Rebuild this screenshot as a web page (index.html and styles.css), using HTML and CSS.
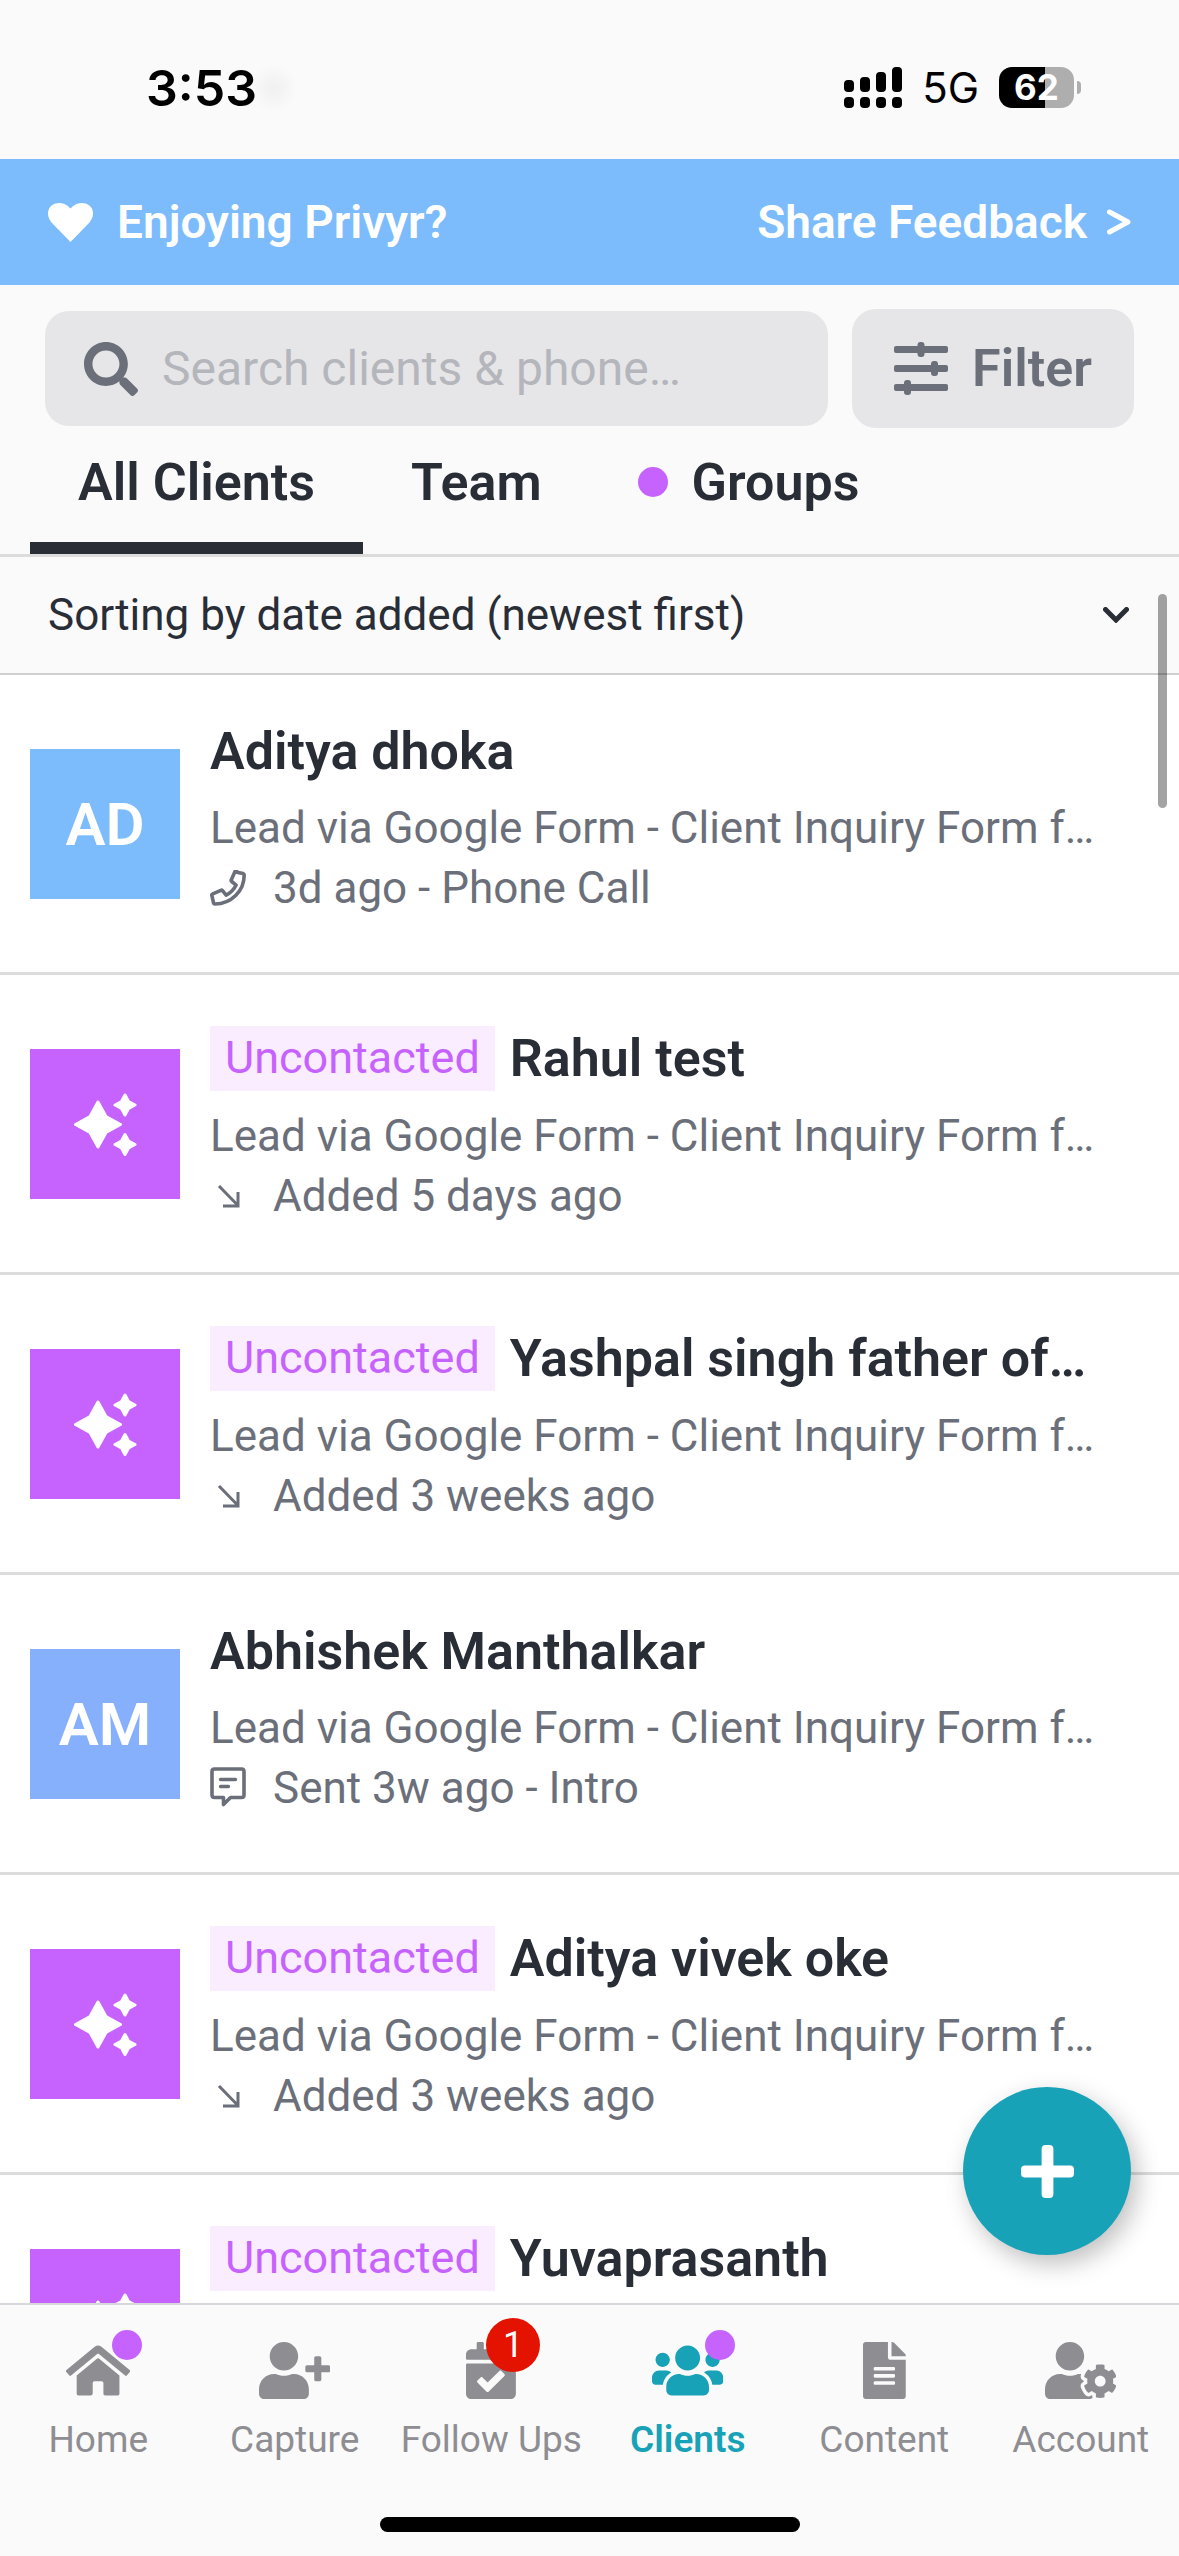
FILE: index.html
```html
<!DOCTYPE html>
<html lang="en">
<head>
<meta charset="utf-8">
<title>Clients</title>
<meta name="viewport" content="width=device-width, initial-scale=1">
<link rel="stylesheet" href="styles.css">
</head>
<body>
<svg class="sprite" aria-hidden="true">
  <symbol id="sparkles" viewBox="0 0 63 63"><path fill="currentColor" stroke="currentColor" stroke-width="3" stroke-linejoin="round" d="M24 9l8 14.500 14.500 8-14.500 8-8 14.500-8-14.500-14.500-8 14.500-8z M51 2l3.500 6.500 6.500 3.500-6.500 3.500-3.500 6.500-3.500-6.500-6.500-3.500 6.500-3.500z M51 41.500l3.500 6.500 6.500 3.500-6.500 3.500-3.500 6.500-3.500-6.500-6.500-3.500 6.500-3.500z"/></symbol>
  <symbol id="arrow" viewBox="0 0 36 36"><path fill="none" stroke="currentColor" stroke-width="3" d="M9 8l18.500 19M13 28h15V14"/></symbol>
  <symbol id="phone" viewBox="0 0 36 36"><path fill="none" stroke="currentColor" stroke-width="3.600" stroke-linejoin="round" d="M25.500 1.900l7.600 1.700c.7.200 1.100.7 1.100 1.400C34.200 21.200 21.200 34 4.900 34c-.7 0-1.200-.4-1.400-1.100L1.900 25.500c-.2-.7.2-1.400.8-1.600l8.200-3.600c.6-.3 1.200-.1 1.600.4l3.600 4.400c5.300-2.500 7.500-4.700 10-10l-4.400-3.600c-.5-.4-.7-1-.4-1.600l3.600-8.200c.2-.6.9-1 1.600-.8z"/></symbol>
  <symbol id="message" viewBox="0 0 36 42"><path fill="none" stroke="currentColor" stroke-width="3.600" stroke-linejoin="round" d="M4.500 2h27q2.500 0 2.500 2.500V28q0 2.500-2.500 2.500H20.500l-7 7v-7h-9Q2 30.500 2 28V4.500Q2 2 4.500 2z"/><path fill="none" stroke="currentColor" stroke-width="3.400" stroke-linecap="round" d="M10.500 12.500h15M10.500 19.500h8"/></symbol>
</svg>

<div class="status">
  <span class="clock">3:53</span>
  <span class="status-right">
    <svg class="signal" viewBox="0 0 58 41" aria-hidden="true"><rect y="13" width="10" height="12" rx="4"/><rect x="16" y="10" width="10" height="15" rx="4"/><rect x="32" y="5" width="10" height="20" rx="4"/><rect x="48" width="10" height="25" rx="4"/><rect y="30" width="10" height="11" rx="4"/><rect x="16" y="30" width="10" height="11" rx="4"/><rect x="32" y="30" width="10" height="11" rx="4"/><rect x="48" y="30" width="10" height="11" rx="4"/></svg>
    <span class="network">5G</span>
    <span class="battery">62</span>
  </span>
</div>

<a class="banner" href="#feedback">
  <svg class="heart" viewBox="0 0 45 39" aria-hidden="true"><path fill="currentColor" d="M22.500 39L4 20C-1.500 14 -1.200 6 4 2.200C9.500-1.500 17-.5 22.500 5.500C28-.5 35.500-1.500 41 2.200C46.200 6 46.500 14 41 20z"/></svg>
  <span>Enjoying Privyr?</span>
  <span class="feedback">Share Feedback</span>
  <svg class="more" viewBox="0 0 24 26" aria-hidden="true"><path fill="none" stroke="currentColor" stroke-width="5" stroke-linecap="round" stroke-linejoin="round" d="M2.500 3L21 13 2.500 23"/></svg>
</a>

<div class="tools">
  <label class="search">
    <svg viewBox="0 0 512 512" aria-hidden="true"><path fill="currentColor" d="M505 442.700L405.300 343c-4.500-4.500-10.600-7-17-7H372c27.600-35.300 44-79.700 44-128C416 93.100 322.900 0 208 0S0 93.100 0 208s93.100 208 208 208c48.300 0 92.700-16.400 128-44v16.300c0 6.400 2.500 12.500 7 17l99.700 99.700c9.400 9.400 24.600 9.400 33.900 0l28.300-28.300c9.400-9.400 9.400-24.600.1-34zM208 336c-70.700 0-128-57.200-128-128 0-70.700 57.200-128 128-128 70.700 0 128 57.200 128 128 0 70.700-57.200 128-128 128z"/></svg>
    <input type="search" placeholder="Search clients &amp; phone…" aria-label="Search clients and phone">
  </label>
  <button class="filter" type="button">
    <svg viewBox="0 0 54 54" fill="currentColor" aria-hidden="true"><rect y="4" width="54" height="7" rx="2"/><rect y="23" width="54" height="7" rx="2"/><rect y="42" width="54" height="7" rx="2"/><rect x="23.500" width="7" height="15" rx="3"/><rect x="37" y="19" width="7" height="15" rx="3"/><rect x="10" y="38" width="7" height="15" rx="3"/></svg>
    Filter
  </button>
</div>

<nav class="tabs" aria-label="Client views">
  <button class="tab active" type="button">All Clients</button>
  <button class="tab" type="button">Team</button>
  <button class="tab" type="button"><i class="dot"></i>Groups</button>
</nav>

<div class="sort">
  <select aria-label="Sort order"><option>Sorting by date added (newest first)</option></select>
  <svg viewBox="0 0 26 16" aria-hidden="true"><path fill="none" stroke="currentColor" stroke-width="5" stroke-linecap="round" d="M2.500 2.500L13 13 23.500 2.500"/></svg>
</div>

<main class="clients">
  <a class="client" href="#c1"><span class="avatar sky">AD</span><span class="info">
    <span class="title"><strong>Aditya dhoka</strong></span>
    <span class="line">Lead via Google Form - Client Inquiry Form f…</span>
    <span class="line"><svg class="kind"><use href="#phone"/></svg>3d ago - Phone Call</span></span></a>
  <a class="client" href="#c2"><span class="avatar new"><svg><use href="#sparkles"/></svg></span><span class="info">
    <span class="title tagged"><em>Uncontacted</em><strong>Rahul test</strong></span>
    <span class="line">Lead via Google Form - Client Inquiry Form f…</span>
    <span class="line"><svg class="kind"><use href="#arrow"/></svg>Added 5 days ago</span></span></a>
  <a class="client" href="#c3"><span class="avatar new"><svg><use href="#sparkles"/></svg></span><span class="info">
    <span class="title tagged"><em>Uncontacted</em><strong>Yashpal singh father of…</strong></span>
    <span class="line">Lead via Google Form - Client Inquiry Form f…</span>
    <span class="line"><svg class="kind"><use href="#arrow"/></svg>Added 3 weeks ago</span></span></a>
  <a class="client" href="#c4"><span class="avatar blue">AM</span><span class="info">
    <span class="title"><strong>Abhishek Manthalkar</strong></span>
    <span class="line">Lead via Google Form - Client Inquiry Form f…</span>
    <span class="line"><svg class="kind tall"><use href="#message"/></svg>Sent 3w ago - Intro</span></span></a>
  <a class="client" href="#c5"><span class="avatar new"><svg><use href="#sparkles"/></svg></span><span class="info">
    <span class="title tagged"><em>Uncontacted</em><strong>Aditya vivek oke</strong></span>
    <span class="line">Lead via Google Form - Client Inquiry Form f…</span>
    <span class="line"><svg class="kind"><use href="#arrow"/></svg>Added 3 weeks ago</span></span></a>
  <a class="client" href="#c6"><span class="avatar new"><svg><use href="#sparkles"/></svg></span><span class="info">
    <span class="title tagged"><em>Uncontacted</em><strong>Yuvaprasanth</strong></span></span></a>
</main>

<div class="scrollbar"></div>
<button class="add" type="button" aria-label="Add client"><svg viewBox="0 0 54 54" fill="currentColor" aria-hidden="true"><rect x="21" width="12" height="54" rx="4"/><rect y="21" width="54" height="12" rx="4"/></svg></button>

<footer class="bottom">
  <nav class="nav" aria-label="Main">
    <a href="#home"><span class="icon"><svg viewBox="0 0 576 512"><path fill="currentColor" d="M280.370 148.260L96 300.110V464a16 16 0 0 0 16 16l112.060-.290a16 16 0 0 0 15.920-16V368a16 16 0 0 1 16-16h64a16 16 0 0 1 16 16v95.640a16 16 0 0 0 16 16.050L464 480a16 16 0 0 0 16-16V300L295.670 148.260a12.190 12.190 0 0 0-15.300 0zM571.600 251.470L318.470 43a48 48 0 0 0-61 0L4.340 251.470a12 12 0 0 0-1.600 16.900l25.500 31A12 12 0 0 0 45.150 301l235.220-193.740a12.190 12.190 0 0 1 15.300 0L530.900 301a12 12 0 0 0 16.900-1.600l25.500-31a12 12 0 0 0-1.700-16.930z"/></svg><i class="dot"></i></span>Home</a>
    <a href="#capture"><span class="icon"><svg viewBox="0 0 640 512"><path fill="currentColor" d="M624 208h-64v-64c0-8.800-7.200-16-16-16h-32c-8.800 0-16 7.200-16 16v64h-64c-8.800 0-16 7.200-16 16v32c0 8.800 7.200 16 16 16h64v64c0 8.800 7.200 16 16 16h32c8.800 0 16-7.200 16-16v-64h64c8.800 0 16-7.200 16-16v-32c0-8.800-7.200-16-16-16zm-400 48c70.700 0 128-57.300 128-128S294.700 0 224 0 96 57.300 96 128s57.300 128 128 128zm89.600 32h-16.700c-22.200 10.200-46.900 16-72.900 16s-50.600-5.800-72.900-16h-16.700C60.200 288 0 348.200 0 422.400V464c0 26.500 21.500 48 48 48h352c26.500 0 48-21.500 48-48v-41.600c0-74.200-60.200-134.400-134.400-134.400z"/></svg></span>Capture</a>
    <a href="#follow-ups"><span class="icon"><svg viewBox="0 0 448 512"><path fill="currentColor" d="M436 160H12c-6.627 0-12-5.373-12-12v-36c0-26.510 21.490-48 48-48h48V12c0-6.627 5.373-12 12-12h40c6.627 0 12 5.373 12 12v52h128V12c0-6.627 5.373-12 12-12h40c6.627 0 12 5.373 12 12v52h48c26.510 0 48 21.490 48 48v36c0 6.627-5.373 12-12 12zM12 192h424c6.627 0 12 5.373 12 12v260c0 26.510-21.490 48-48 48H48c-26.510 0-48-21.490-48-48V204c0-6.627 5.373-12 12-12zm333.296 95.947l-28.169-28.398c-4.667-4.705-12.265-4.736-16.970-.068L194.120 364.665l-45.980-46.352c-4.667-4.705-12.266-4.736-16.971-.068l-28.397 28.170c-4.705 4.667-4.736 12.265-.068 16.970l82.601 83.269c4.667 4.705 12.265 4.736 16.970.068l142.953-141.805c4.705-4.667 4.736-12.265.068-16.970z"/></svg><b class="count">1</b></span>Follow Ups</a>
    <a class="current" href="#clients"><span class="icon"><svg viewBox="0 0 640 512"><path fill="currentColor" d="M96 224c35.300 0 64-28.700 64-64s-28.700-64-64-64-64 28.700-64 64 28.700 64 64 64zm448 0c35.300 0 64-28.700 64-64s-28.700-64-64-64-64 28.700-64 64 28.700 64 64 64zm32 32h-64c-17.600 0-33.500 7.100-45.100 18.600 40.300 22.100 68.900 62 75.100 109.400h66c17.700 0 32-14.300 32-32v-32c0-35.300-28.700-64-64-64zm-256 0c61.900 0 112-50.100 112-112S381.900 32 320 32 208 82.100 208 144s50.100 112 112 112zm76.800 32h-8.300c-20.800 10-43.900 16-68.500 16s-47.600-6-68.500-16h-8.300C179.600 288 128 339.600 128 403.200V432c0 26.500 21.500 48 48 48h288c26.500 0 48-21.500 48-48v-28.800c0-63.600-51.600-115.200-115.200-115.200zm-223.700-13.400C161.500 263.100 145.600 256 128 256H64c-35.300 0-64 28.700-64 64v32c0 17.700 14.300 32 32 32h65.900c6.300-47.400 34.900-87.300 75.200-109.400z"/></svg><i class="dot"></i></span>Clients</a>
    <a href="#content"><span class="icon"><svg viewBox="0 0 384 512"><path fill="currentColor" d="M224 136V0H24C10.700 0 0 10.700 0 24v464c0 13.300 10.700 24 24 24h336c13.300 0 24-10.700 24-24V160H248c-13.200 0-24-10.800-24-24zm64 236c0 6.600-5.400 12-12 12H108c-6.600 0-12-5.400-12-12v-8c0-6.600 5.400-12 12-12h168c6.600 0 12 5.400 12 12v8zm0-64c0 6.600-5.400 12-12 12H108c-6.600 0-12-5.400-12-12v-8c0-6.600 5.400-12 12-12h168c6.600 0 12 5.400 12 12v8zm0-72v8c0 6.600-5.400 12-12 12H108c-6.600 0-12-5.400-12-12v-8c0-6.600 5.400-12 12-12h168c6.600 0 12 5.400 12 12zm96-114.100v6.100H256V0h6.100c6.400 0 12.500 2.500 17 7l97.900 98c4.500 4.500 7 10.600 7 16.900z"/></svg></span>Content</a>
    <a href="#account"><span class="icon"><svg viewBox="0 0 640 512"><path fill="currentColor" d="M610.500 373.300c2.600-14.100 2.600-28.500 0-42.600l25.800-14.900c3-1.700 4.300-5.200 3.300-8.500-6.700-21.600-18.200-41.200-33.200-57.400-2.300-2.500-6-3.100-9-1.400l-25.800 14.900c-10.900-9.300-23.400-16.500-36.900-21.300v-29.800c0-3.400-2.400-6.400-5.700-7.100-22.300-5-45-4.800-66.200 0-3.300.7-5.700 3.700-5.700 7.100v29.800c-13.500 4.800-26 12-36.900 21.300l-25.800-14.900c-2.900-1.700-6.700-1.100-9 1.400-15 16.200-26.500 35.800-33.200 57.400-1 3.300.4 6.800 3.300 8.500l25.800 14.900c-2.600 14.100-2.600 28.500 0 42.600l-25.800 14.900c-3 1.700-4.300 5.200-3.300 8.500 6.700 21.600 18.200 41.100 33.200 57.400 2.300 2.500 6 3.100 9 1.400l25.800-14.900c10.900 9.300 23.400 16.500 36.900 21.300v29.800c0 3.400 2.400 6.400 5.700 7.100 22.300 5 45 4.800 66.200 0 3.300-.7 5.700-3.700 5.700-7.100v-29.800c13.500-4.800 26-12 36.900-21.300l25.800 14.900c2.900 1.700 6.700 1.100 9-1.400 15-16.200 26.500-35.800 33.200-57.400 1-3.300-.4-6.800-3.300-8.500l-25.800-14.900zM496 400.500c-26.800 0-48.500-21.800-48.500-48.500s21.800-48.500 48.500-48.500 48.500 21.800 48.500 48.500-21.700 48.500-48.500 48.500zM224 256c70.700 0 128-57.300 128-128S294.700 0 224 0 96 57.300 96 128s57.300 128 128 128zm201.200 226.500c-2.300-1.200-4.600-2.600-6.800-3.900l-7.900 4.600c-6 3.400-12.800 5.300-19.600 5.300-10.900 0-21.400-4.600-28.900-12.600-18.300-19.800-32.300-43.900-40.200-69.600-5.500-17.700 1.900-36.400 17.900-45.700l7.900-4.600c-.1-2.600-.1-5.200 0-7.800l-7.900-4.600c-16-9.200-23.400-28-17.900-45.700.9-2.900 2.200-5.800 3.200-8.700-3.800-.3-7.500-1.200-11.400-1.200h-16.700c-22.200 10.200-46.900 16-72.900 16s-50.600-5.800-72.900-16h-16.700C60.200 288 0 348.200 0 422.400V464c0 26.500 21.500 48 48 48h352c10.100 0 19.500-3.200 27.200-8.500-1.200-3.800-2-7.700-2-11.800v-9.200z"/></svg></span>Account</a>
  </nav>
  <div class="home-bar"></div>
</footer>
</body>
</html>
```
FILE: styles.css
```css
* { box-sizing: border-box; }

body {
  position: relative;
  display: flex;
  flex-direction: column;
  height: 100vh;
  margin: 0;
  overflow: hidden;
  background: #fafafa;
  color: #292d36;
  font-family: Roboto, "Liberation Sans", sans-serif;
  font-size: 44px;
}

a { color: inherit; text-decoration: none; }
button, input, select { border: 0; margin: 0; padding: 0; background: none; color: inherit; font: inherit; }
svg { display: block; flex: none; }
.sprite { position: absolute; width: 0; height: 0; }

.status {
  display: flex;
  flex: none;
  align-items: center;
  justify-content: space-between;
  height: 159px;
  padding: 16px 97px 0 146px;
  color: #000;
  font-family: Inter, "Liberation Sans", sans-serif;
}
.clock {
  padding-right: 48px;
  background: radial-gradient(circle at 128px 50%, #f0f0f0, #fafafa 24px);
  font-size: 50px;
  font-weight: 600;
  line-height: 60px;
}
.status-right { display: flex; align-items: center; gap: 20px; }
.signal { width: 58px; height: 41px; }
.network { font-size: 42px; line-height: 48px; }
.battery {
  position: relative;
  width: 75px;
  height: 41px;
  margin-right: 8px;
  border-radius: 13px;
  background: linear-gradient(90deg, #000 62%, #aeaeae 62%);
  color: #fff;
  font-size: 35px;
  font-weight: 700;
  line-height: 41px;
  text-align: center;
}
.battery::after {
  position: absolute;
  top: 14px;
  right: -7px;
  width: 4px;
  height: 13px;
  border-radius: 0 4px 4px 0;
  background: #aeaeae;
  content: "";
}

.banner {
  display: flex;
  flex: none;
  align-items: center;
  height: 126px;
  padding: 0 48px;
  background: #7cbcfc;
  color: #fff;
  font-size: 46px;
  font-weight: 600;
}
.heart { width: 45px; height: 39px; margin-right: 24px; }
.feedback { margin-left: auto; }
.more { width: 24px; height: 26px; margin-left: 20px; }

.tools { display: flex; flex: none; align-items: center; gap: 24px; padding: 24px 45px 0; color: #6b6f7a; }
.search {
  display: flex;
  flex: 1;
  align-items: center;
  gap: 24px;
  height: 115px;
  padding: 0 39px;
  border-radius: 24px;
  background: #e6e6e8;
}
.search svg { width: 54px; height: 54px; }
.search input { flex: 1; min-width: 0; outline: 0; font-size: 48px; }
.search input::placeholder { color: #b4b6bc; }
.filter {
  display: flex;
  align-items: center;
  justify-content: center;
  gap: 24px;
  width: 282px;
  height: 119px;
  border-radius: 24px;
  background: #e6e6e8;
  font-size: 52px;
  font-weight: 600;
}
.filter svg { width: 54px; height: 54px; }

.tabs { display: flex; flex: none; height: 129px; padding: 0 30px; border-bottom: 3px solid #dcdcdc; }
.tab {
  display: flex;
  align-items: center;
  gap: 24px;
  padding: 0 48px 6px;
  border-bottom: 12px solid transparent;
  font-size: 52px;
  font-weight: 600;
}
.tab.active { border-color: #292d36; }
.dot { width: 30px; height: 30px; border-radius: 50%; background: #c663ff; }

.sort {
  display: flex;
  flex: none;
  align-items: center;
  height: 118px;
  padding: 0 50px 0 48px;
  border-bottom: 2px solid #cfcfcf;
}
.sort select { flex: 1; appearance: none; outline: 0; }
.sort svg { width: 26px; height: 16px; }

.clients { flex: 1; min-height: 0; overflow: hidden; background: #fff; }
.client {
  display: flex;
  gap: 30px;
  height: 300px;
  padding: 0 30px;
  border-bottom: 3px solid #dcdcdc;
}
.avatar {
  display: flex;
  flex: none;
  align-items: center;
  justify-content: center;
  width: 150px;
  height: 150px;
  margin-top: 74px;
  color: #fff;
  font-size: 60px;
  font-weight: 600;
}
.avatar svg { width: 63px; height: 63px; }
.sky { background: #7cbcfc; }
.blue { background: #86b0fc; }
.new { background: #c663ff; }
.info { flex: 1; min-width: 0; padding-top: 51px; white-space: nowrap; }
.title { display: flex; align-items: center; gap: 15px; height: 51px; margin-bottom: 21px; }
.title.tagged { height: 65px; margin-bottom: 15px; }
.title em {
  height: 65px;
  padding: 0 15px;
  background: #f9edff;
  color: #c663ff;
  font-size: 45px;
  font-style: normal;
  line-height: 64px;
}
.title strong { font-size: 52px; font-weight: 600; }
.line { display: flex; align-items: center; height: 60px; color: #6b6f7a; }
.kind { width: 36px; height: 36px; margin-right: 27px; }
.kind.tall { height: 42px; }

.scrollbar {
  position: absolute;
  top: 594px;
  right: 12px;
  width: 9px;
  height: 214px;
  border-radius: 5px;
  background: rgba(0, 0, 0, .36);
}
.add {
  position: absolute;
  right: 48px;
  bottom: 301px;
  display: flex;
  align-items: center;
  justify-content: center;
  width: 168px;
  height: 168px;
  border-radius: 50%;
  background: #18a2b8;
  box-shadow: 6px 9px 24px rgba(0, 0, 0, .25);
  color: #fff;
}
.add svg { width: 53px; height: 53px; }

.bottom { position: relative; flex: none; height: 253px; padding: 37px 0 24px; border-top: 2px solid #d8d8dc; background: #fafafa; }
.nav { display: grid; grid-template-columns: repeat(6, 1fr); color: #8e8d92; font-size: 37px; }
.nav a { display: flex; flex-direction: column; align-items: center; gap: 18px; line-height: 46px; white-space: nowrap; }
.icon { position: relative; display: flex; }
.icon svg { height: 57px; }
.icon .dot { position: absolute; top: -12px; right: -12px; }
.count {
  position: absolute;
  top: -24px;
  right: -24px;
  width: 54px;
  height: 54px;
  border-radius: 50%;
  background: #e31300;
  color: #fff;
  font-size: 36px;
  font-weight: 400;
  line-height: 54px;
  text-align: center;
}
.current { color: #18a2b8; font-weight: 600; }
.home-bar { position: absolute; bottom: 24px; left: 50%; width: 420px; height: 15px; margin-left: -210px; border-radius: 8px; background: #000; }
```
